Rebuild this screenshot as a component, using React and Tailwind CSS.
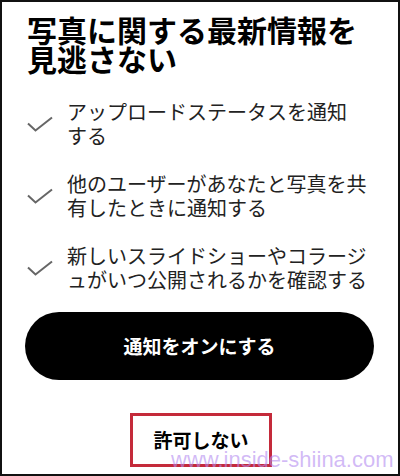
const items = [
  ["アップロードステータスを通知", "する"],
  ["他のユーザーがあなたと写真を共", "有したときに通知する"],
  ["新しいスライドショーやコラージ", "ュがいつ公開されるかを確認する"],
];

function Check() {
  return (
    <svg width="26" height="16" viewBox="0 0 26 16" className="shrink-0">
      <path d="M1 7.5 L8.5 14.5 L25 1.5" fill="none" stroke="#666" strokeWidth="2" />
    </svg>
  );
}

export default function App() {
  return (
    <div
      className="relative w-[400px] h-[476px] overflow-hidden bg-white border-2 border-[#111] text-black"
      style={{ fontFamily: '"Noto Sans CJK JP", "Noto Sans", sans-serif' }}
    >
      <h1 className="pl-[25px] pt-[13px] text-[30px] leading-[29px] font-bold">
        写真に関する最新情報を
        <br />
        見逃さない
      </h1>

      <ul className="mt-[27px] flex flex-col gap-[24px] pl-[25px]">
        {items.map((lines, i) => (
          <li key={i} className="flex items-center gap-[14px]">
            <Check />
            <div className="text-[20px] leading-[24px] text-[#222] whitespace-nowrap">
              {lines.map((l, j) => (
                <div key={j}>{l}</div>
              ))}
            </div>
          </li>
        ))}
      </ul>

      <button className="mt-[20px] ml-[23px] w-[349px] h-[68px] rounded-full bg-black text-white text-[19px] font-bold">
        通知をオンにする
      </button>

      <div className="mt-[33px] flex justify-center">
        <div className="ml-[2px] w-[142px] h-[54px] border-[3px] border-[#c42a3a] flex items-center justify-center text-[19px] font-bold">
          許可しない
        </div>
      </div>

      <div
        className="absolute left-[169px] bottom-[1px] text-[22px] leading-[26px] text-[#b48cf0]/60 whitespace-nowrap"
        style={{ fontFamily: '"Liberation Sans", Arial, sans-serif' }}
      >
        www.inside-shiina.com
      </div>
    </div>
  );
}
